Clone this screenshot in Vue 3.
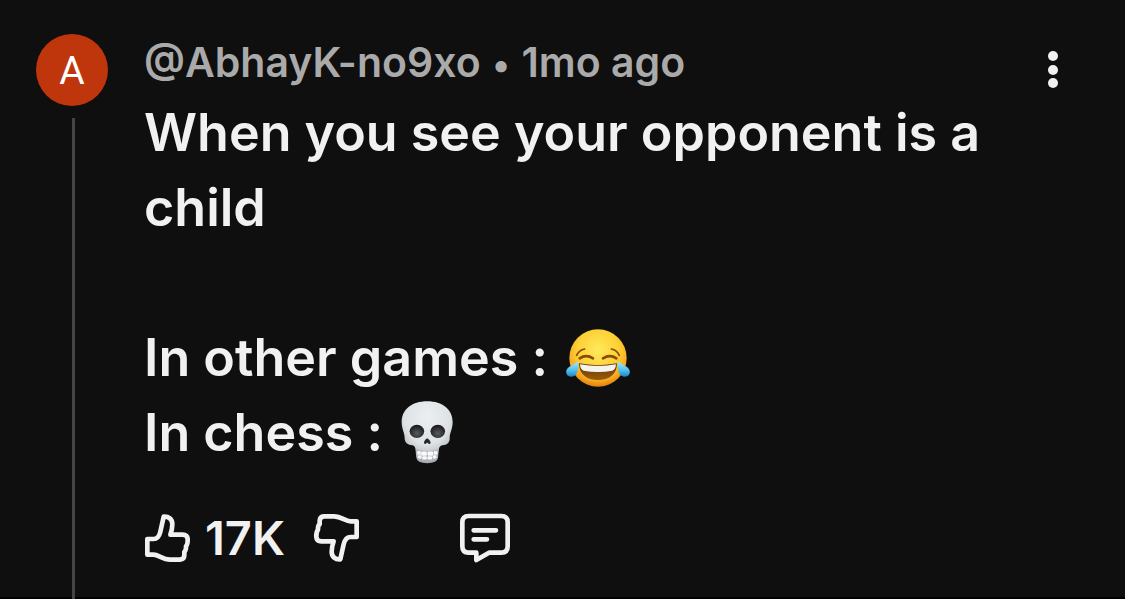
<script setup>
const comment = {
  initial: 'A',
  author: '@AbhayK-no9xo',
  age: '1mo ago',
  likes: '17K',
}
const thumb =
  'M52 114V161H70C86 161 98 176 120 176H150Q163 175 163 162V153Q169 147 168 136Q174 128 173 114Q172 101 158 101H121Q127 84 127 70C127 54 116 46 101 47L91 92Q86 114 70 114Z'
</script>

<template>
  <article class="comment">
    <div class="rail">
      <a href="#" class="avatar" :aria-label="comment.author">{{ comment.initial }}</a>
      <div class="thread"></div>
    </div>

    <div class="main">
      <header class="meta">
        <a href="#" class="author">{{ comment.author }}</a> <span class="dot">•</span> {{ comment.age }}
      </header>

      <div class="body">
        <p>When you see your opponent is a child</p>
        <p class="gap">
          In other games :
          <svg class="emoji joy" viewBox="42 38 198 178" role="img" aria-label="face with tears of joy">
            <defs>
              <radialGradient id="joyFace" cx="0.5" cy="0.36" r="0.66">
                <stop offset="0" stop-color="#ffe95c" />
                <stop offset="0.55" stop-color="#fdd035" />
                <stop offset="0.82" stop-color="#f7a91f" />
                <stop offset="1" stop-color="#dc780d" />
              </radialGradient>
              <linearGradient id="joyMouth" x1="0" y1="0" x2="0" y2="1">
                <stop offset="0" stop-color="#6b3606" />
                <stop offset="1" stop-color="#965b0b" />
              </linearGradient>
              <linearGradient id="joyTear" x1="0" y1="0" x2="0" y2="1">
                <stop offset="0" stop-color="#a9e9fb" />
                <stop offset="0.6" stop-color="#4fbdeb" />
                <stop offset="1" stop-color="#1787ca" />
              </linearGradient>
            </defs>
            <circle cx="141" cy="127" r="86" fill="url(#joyFace)" />
            <g fill="none" stroke="#8a4b08" stroke-linecap="round">
              <path d="M77 119Q84 103 101 100" stroke-width="5" />
              <path d="M205 119Q198 103 181 100" stroke-width="5" />
              <path d="M86 128Q105 115 126 128" stroke-width="8" />
              <path d="M156 128Q177 115 196 128" stroke-width="8" />
            </g>
            <path d="M84 143Q141 154 198 143C198 177 174 193 141 193S84 177 84 143Z" fill="url(#joyMouth)" />
            <path d="M87 146Q141 156 195 146Q194 162 184 165Q141 173 98 165Q88 162 87 146Z" fill="#f5f3ee" />
            <path d="M82 137C84 157 80 181 62 183C43 184 40 163 55 153Q68 147 82 137Z" fill="url(#joyTear)" />
            <path d="M200 137C198 157 202 181 220 183C239 184 242 163 227 153Q214 147 200 137Z" fill="url(#joyTear)" />
          </svg>
        </p>
        <p>
          In chess :
          <svg class="emoji skull" viewBox="34 30 166 198" role="img" aria-label="skull">
            <defs>
              <radialGradient id="bone" cx="0.5" cy="0.25" r="0.75">
                <stop offset="0" stop-color="#eceff1" />
                <stop offset="0.6" stop-color="#dee2e5" />
                <stop offset="1" stop-color="#a4a7ab" />
              </radialGradient>
              <radialGradient id="socket" cx="0.5" cy="0.65" r="0.6">
                <stop offset="0" stop-color="#5a5b5d" />
                <stop offset="1" stop-color="#1a1a1b" />
              </radialGradient>
            </defs>
            <path d="M116 33C69 33 39 58 39 96C39 118 48 128 48 144C48 158 57 165 72 166Q80 168 81 180L83 202Q85 220 116 220T149 202L151 180Q152 168 162 166C177 165 184 158 184 144C184 128 193 118 193 96C193 58 163 33 116 33Z" fill="url(#bone)" />
            <ellipse cx="85" cy="124" rx="22" ry="20" fill="url(#socket)" />
            <ellipse cx="148" cy="124" rx="22" ry="20" fill="url(#socket)" />
            <path d="M116 145C111 148 105 155 107 161Q111 164 116 158Q121 164 126 161C128 155 121 148 116 145Z" fill="#252526" />
            <path d="M82 177Q116 189 150 177L147 203Q116 214 85 203Z" fill="#b4b7ba" />
            <g fill="#f8f9fa">
              <rect x="86" y="183" width="11" height="12" rx="4" />
              <rect x="98" y="185" width="17" height="13" rx="4" />
              <rect x="117" y="185" width="17" height="13" rx="4" />
              <rect x="136" y="183" width="11" height="12" rx="4" />
              <rect x="88" y="196" width="11" height="10" rx="4" />
              <rect x="101" y="199" width="14" height="10" rx="4" />
              <rect x="117" y="199" width="14" height="10" rx="4" />
              <rect x="133" y="196" width="11" height="10" rx="4" />
            </g>
          </svg>
        </p>
      </div>

      <footer class="actions">
        <button type="button" class="like" aria-label="Like">
          <svg class="thumb" viewBox="42 36 144 150"><path :d="thumb" /></svg>
          <span>{{ comment.likes }}</span>
        </button>
        <button type="button" class="dislike" aria-label="Dislike">
          <svg class="thumb" viewBox="42 36 144 150">
            <path :d="thumb" transform="rotate(180 114 111)" />
          </svg>
        </button>
        <button type="button" class="reply" aria-label="Replies">
          <svg class="bubble" viewBox="45 42 156 150">
            <path d="M74 51H172Q191 51 191 70V142Q191 161 172 161H135L97 183V161H74Q55 161 55 142V70Q55 51 74 51Z" />
            <path d="M89 94H156M89 121H129" />
          </svg>
        </button>
      </footer>
    </div>

    <button type="button" class="more" aria-label="More options">
      <svg viewBox="0 0 12 40">
        <circle cx="6" cy="6" r="5" />
        <circle cx="6" cy="20" r="5" />
        <circle cx="6" cy="33" r="5" />
      </svg>
    </button>
  </article>
</template>

<style>
body {
  margin: 0;
  background: #0f0f0f;
}
</style>

<style scoped>
.comment {
  box-sizing: border-box;
  min-height: 100vh;
  display: flex;
  padding: 34px 66px 0 36px;
  border-bottom: 2px solid #000;
  background: #0f0f0f;
  color: #f1f1f1;
  font-family: Inter, "Liberation Sans", sans-serif;
  font-weight: 600;
}
a {
  color: inherit;
  text-decoration: none;
}
button {
  display: flex;
  align-items: center;
  padding: 0;
  border: 0;
  background: none;
  color: inherit;
  font: inherit;
  cursor: pointer;
}
svg {
  display: block;
}
.rail {
  display: flex;
  flex-direction: column;
  gap: 12px;
  margin-right: 36px;
}
.avatar {
  width: 72px;
  height: 72px;
  border-radius: 50%;
  background: #bf360c;
  color: #fff;
  font: 400 39px/74px Roboto, sans-serif;
  text-align: center;
}
.thread {
  flex: 1;
  width: 3px;
  margin: 0 0 -2px 36px;
  background: #444;
}
.main {
  flex: 1;
  min-width: 0;
}
.meta {
  color: #aaa;
  font-size: 41px;
  line-height: 56px;
}
.dot {
  margin: 0 1px;
  font-size: 36px;
  line-height: 1;
}
.body {
  margin-top: 5px;
  font-size: 52px;
  line-height: 75px;
}
.body p {
  margin: 0;
}
.body .gap {
  margin-top: 75px;
}
.emoji {
  display: inline-block;
  margin-left: 4px;
}
.joy {
  width: 66px;
  height: 60px;
  vertical-align: -12px;
}
.skull {
  width: 55px;
  height: 66px;
  vertical-align: -15px;
}
.actions {
  display: flex;
  align-items: center;
  margin-top: 40px;
  font-size: 47px;
  line-height: 56px;
}
.like {
  gap: 13px;
}
.dislike {
  margin-left: 27px;
}
.reply {
  margin-left: 99px;
}
.thumb,
.bubble {
  fill: none;
  stroke: #f1f1f1;
  stroke-width: 14;
  stroke-linejoin: round;
  stroke-linecap: round;
}
.thumb {
  width: 48px;
  height: 50px;
}
.bubble {
  width: 52px;
  height: 50px;
}
.more {
  align-self: flex-start;
  margin-top: 16px;
}
.more svg {
  width: 12px;
  height: 40px;
  fill: #f1f1f1;
}
</style>
